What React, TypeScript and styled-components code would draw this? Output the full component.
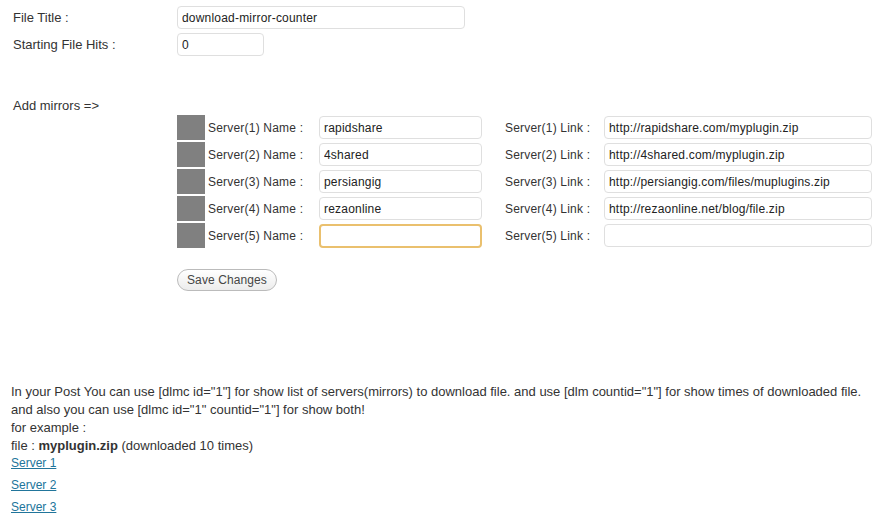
import React from "react";
import styled, { createGlobalStyle } from "styled-components";

const Global = createGlobalStyle`
  html, body { margin: 0; padding: 0; background: #fff; }
  body {
    font-family: "Liberation Sans", Arial, sans-serif;
    font-size: 12px;
    color: #333;
  }
`;

const Page = styled.div`
  padding: 6px 0 0 0;
  width: 880px;
  height: 524px;
  box-sizing: border-box;
  overflow: hidden;
`;

const FieldRow = styled.div`
  display: flex;
  align-items: center;
  height: 23px;
  margin-bottom: 4px;
`;

const FieldLabel = styled.label`
  width: 164px;
  padding-left: 13px;
  flex: none;
  font-size: 13px;
`;

const TextInput = styled.input<{ $w: number; $focused?: boolean; $h?: number }>`
  box-sizing: border-box;
  width: ${(p) => p.$w}px;
  height: ${(p) => p.$h ?? 23}px;
  border: ${(p) => (p.$focused ? "2px solid #eac06e" : "1px solid #dfdfdf")};
  border-radius: 4px;
  background: #fff;
  padding: 0 ${(p) => (p.$focused ? 3 : 4)}px;
  font-family: "Liberation Sans", Arial, sans-serif;
  font-size: 12px;
  letter-spacing: 0.2px;
  color: #222;
  outline: none;
  margin: 0;
`;

const SectionLabel = styled.div`
  padding-left: 13px;
  margin-top: 41px;
  line-height: 17px;
  margin-bottom: 1px;
  font-size: 13px;
`;

const Mirrors = styled.div`
  margin-left: 177px;
  display: flex;
  flex-direction: column;
  gap: 2px;
`;

const MirrorRow = styled.div`
  display: flex;
  align-items: center;
  height: 25px;
`;

const Handle = styled.div`
  width: 28px;
  height: 25px;
  background: #808080;
  flex: none;
`;

const NameLabel = styled.span`
  width: 114px;
  padding-left: 3px;
  box-sizing: border-box;
  flex: none;
  letter-spacing: 0.2px;
`;

const LinkLabel = styled.span`
  width: 99px;
  margin-left: 23px;
  flex: none;
  letter-spacing: 0.2px;
`;

const SaveButton = styled.button`
  margin: 21px 0 0 177px;
  height: 22px;
  padding: 0 9px;
  border: 1px solid #bbb;
  border-radius: 11px;
  background: linear-gradient(#ffffff, #ececec);
  font-family: "Liberation Sans", Arial, sans-serif;
  font-size: 12px;
  letter-spacing: 0.1px;
  color: #464646;
  cursor: pointer;
  display: block;
`;

const Help = styled.div`
  margin-top: 92px;
  padding-left: 11px;
  line-height: 18px;
  font-size: 13px;
`;

const ServerLink = styled.a`
  display: block;
  color: #21759b;
  text-decoration: underline;
  font-size: 12px;
  line-height: 16px;
  margin-bottom: 6px;
`;

const mirrors = [
  { name: "rapidshare", link: "http://rapidshare.com/myplugin.zip" },
  { name: "4shared", link: "http://4shared.com/myplugin.zip" },
  { name: "persiangig", link: "http://persiangig.com/files/muplugins.zip" },
  { name: "rezaonline", link: "http://rezaonline.net/blog/file.zip" },
  { name: "", link: "" },
];

export default function App() {
  return (
    <Page>
      <Global />
      <FieldRow>
        <FieldLabel>File Title :</FieldLabel>
        <TextInput $w={288} defaultValue="download-mirror-counter" />
      </FieldRow>
      <FieldRow>
        <FieldLabel>Starting File Hits :</FieldLabel>
        <TextInput $w={87} defaultValue="0" />
      </FieldRow>
      <SectionLabel>Add mirrors =&gt;</SectionLabel>
      <Mirrors>
        {mirrors.map((m, i) => (
          <MirrorRow key={i}>
            <Handle />
            <NameLabel>Server({i + 1}) Name :</NameLabel>
            <TextInput $w={163} $h={i === 4 ? 24 : 23} $focused={i === 4} defaultValue={m.name} />
            <LinkLabel>Server({i + 1}) Link :</LinkLabel>
            <TextInput $w={268} defaultValue={m.link} />
          </MirrorRow>
        ))}
      </Mirrors>
      <SaveButton>Save Changes</SaveButton>
      <Help>
        In your Post You can use [dlmc id="1"] for show list of servers(mirrors) to download file. and use [dlm countid="1"] for show times of downloaded file.
        <br />
        and also you can use [dlmc id="1" countid="1"] for show both!
        <br />
        for example :
        <br />
        file : <b>myplugin.zip</b> (downloaded 10 times)
        <ServerLink href="#">Server 1</ServerLink>
        <ServerLink href="#">Server 2</ServerLink>
        <ServerLink href="#">Server 3</ServerLink>
      </Help>
    </Page>
  );
}
